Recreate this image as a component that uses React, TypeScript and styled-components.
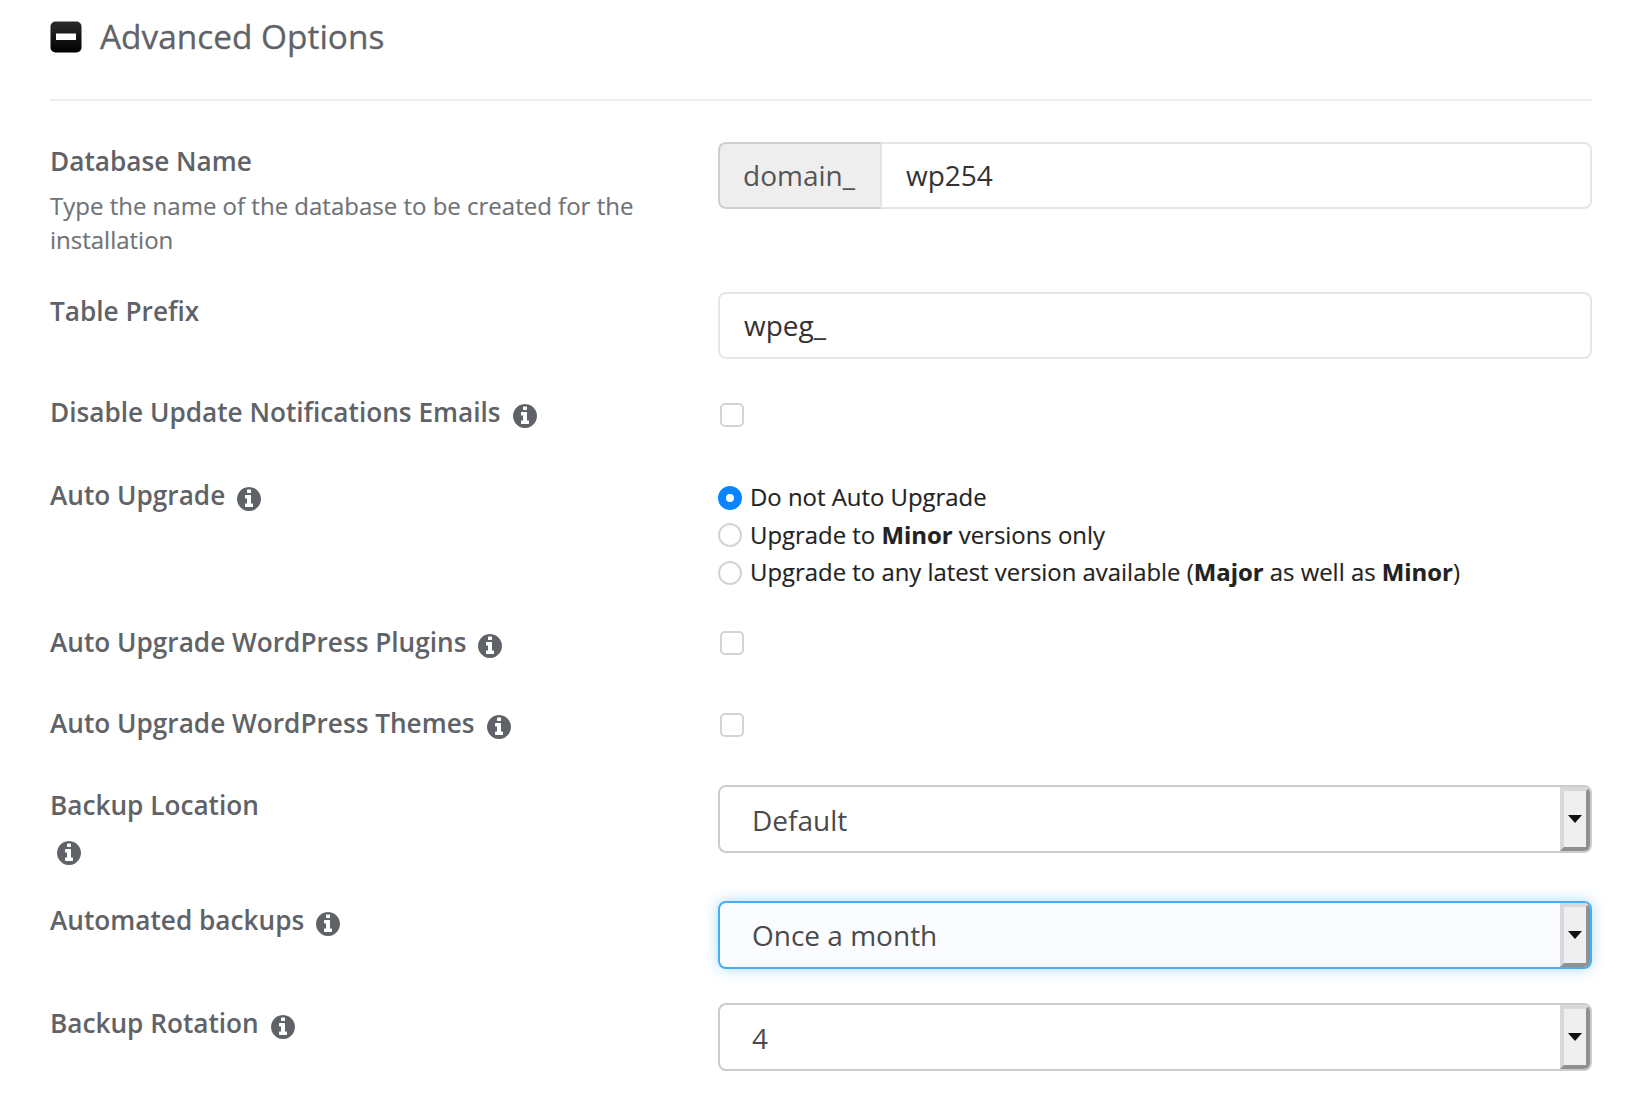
import React from "react";
import styled, { createGlobalStyle } from "styled-components";

const Global = createGlobalStyle`
  html, body { margin: 0; padding: 0; background: #fff; }
  body { font-family: "Open Sans", "Noto Sans", sans-serif; }
`;

const Page = styled.div`
  width: 1644px;
  height: 1111px;
  box-sizing: border-box;
  padding: 0 52px 0 50px;
  overflow: hidden;
`;

const Header = styled.header`
  box-sizing: border-box;
  border-bottom: 2px solid #eeeeee;
  height: 101px;
  display: flex;
  align-items: flex-start;
  padding-top: 14px;
  gap: 18px;
`;

const Title = styled.h2`
  margin: 0;
  font-size: 33.4px;
  line-height: 45px;
  font-weight: 400;
  color: #5f6368;
  -webkit-text-stroke: 0.3px #5f6368;
`;

const ToggleIcon = styled.svg`
  width: 32px;
  height: 32px;
  margin-top: 7px;
  flex: none;
`;

const Form = styled.div`
  padding-top: 41px;
`;

const Row = styled.div<{ $h: number }>`
  display: grid;
  grid-template-columns: 668px 1fr;
  min-height: ${(p) => p.$h}px;
  align-items: start;
`;

const LabelCol = styled.div<{ $offset?: number }>`
  margin-top: ${(p) => p.$offset ?? 0}px;
`;

const Label = styled.div`
  font-size: 26.2px;
  line-height: 38px;
  font-weight: 600;
  color: #5f6368;
`;

const Desc = styled.div`
  font-size: 24px;
  line-height: 34px;
  color: #6f7377;
  margin-top: 9px;
  width: 610px;
  -webkit-text-stroke: 0.15px #6f7377;
`;

const InfoSvg = styled.svg`
  width: 24px;
  height: 24px;
  fill: #5f6368;
  vertical-align: -6px;
  margin-left: 12px;
`;

const InfoBlock = styled.div`
  margin-top: 17px;
  height: 24px;
  line-height: 0;
  padding-left: 7px;
  & svg { margin-left: 0; vertical-align: top; }
`;

const Info = () => (
  <InfoSvg viewBox="128 128 1536 1536" aria-hidden="true">
    <path d="M1152 1376v-160q0-14-9-23t-23-9h-96v-512q0-14-9-23t-23-9h-320q-14 0-23 9t-9 23v160q0 14 9 23t23 9h96v320h-96q-14 0-23 9t-9 23v160q0 14 9 23t23 9h448q14 0 23-9t9-23zm-128-896v-160q0-14-9-23t-23-9h-192q-14 0-23 9t-9 23v160q0 14 9 23t23 9h192q14 0 23-9t9-23zm640 416q0 209-103 385.5t-279.5 279.5-385.5 103-385.5-103-279.5-279.5-103-385.5 103-385.5 279.5-279.5 385.5-103 385.5 103 279.5 279.5 103 385.5z" />
  </InfoSvg>
);

const Control = styled.div<{ $offset?: number }>`
  padding-top: ${(p) => p.$offset ?? 0}px;
`;

const InputGroup = styled.div`
  display: flex;
  height: 67px;
`;

const Addon = styled.div`
  width: 164px;
  box-sizing: border-box;
  background: #eeeeee;
  border: 2px solid #cfcfcf;
  border-right: 2px solid #e4e4e4;
  border-radius: 8px 0 0 8px;
  font-size: 28px;
  line-height: 63px;
  color: #555555;
  padding-left: 23px;
`;

const TextInput = styled.input<{ $joined?: boolean }>`
  flex: 1;
  display: block;
  width: 100%;
  height: 67px;
  box-sizing: border-box;
  border: 2px solid #e6e6e6;
  border-left-width: ${(p) => (p.$joined ? 0 : 2)}px;
  border-radius: ${(p) => (p.$joined ? "0 8px 8px 0" : "8px")};
  padding: 0 24px 2px;
  font: 400 28px "Open Sans", sans-serif;
  color: #333333;
  background: #fff;
  outline: none;
`;

const Checkbox = styled.span`
  display: block;
  width: 24px;
  height: 24px;
  margin-left: 2px;
  box-sizing: border-box;
  border: 2px solid #d4d4d4;
  border-radius: 5px;
  background: #fff;
`;

const RadioList = styled.div`
  display: flex;
  flex-direction: column;
`;

const RadioRow = styled.div`
  display: flex;
  align-items: center;
  gap: 8px;
  height: 37.5px;
  font-size: 23.9px;
  color: #222222;
  & b { font-weight: 700; }
`;

const RadioText = styled.span`
  margin-top: -2px;
  -webkit-text-stroke: 0.15px #222222;
`;

const Radio = styled.span<{ $on?: boolean }>`
  flex: none;
  width: 24px;
  height: 24px;
  box-sizing: border-box;
  border-radius: 50%;
  background: #fff;
  border: ${(p) => (p.$on ? "8px solid #0a84ff" : "2px solid #d4d4d4")};
`;

const Select = styled.div<{ $focus?: boolean }>`
  display: flex;
  height: 67.5px;
  box-sizing: border-box;
  border: 2px solid ${(p) => (p.$focus ? "#46aef5" : "#cccccc")};
  border-radius: 8px;
  background: ${(p) => (p.$focus ? "#fafcff" : "#fff")};
  box-shadow: ${(p) => (p.$focus ? "0 0 14px rgba(70,174,245,.45)" : "none")};
  overflow: hidden;
  overflow: clip;
`;

const SelectValue = styled.div<{ $focus?: boolean }>`
  flex: 1;
  padding-left: 32px;
  font-size: 28px;
  line-height: ${(p) => (p.$focus ? 64 : 66)}px;
  color: #4a4a4a;
`;

const SelectArrow = styled.div`
  width: 30px;
  box-sizing: border-box;
  display: flex;
  align-items: center;
  justify-content: center;
  background: #efefef;
  border-style: solid;
  border-width: 4px;
  border-color: #d8d8d8 #909090 #909090 #d8d8d8;
  &::after {
    content: "";
    display: block;
    border-style: solid;
    border-width: 8px 7px 0 7px;
    border-color: #111 transparent transparent transparent;
  }
`;

const Dropdown = ({ value, focus }: { value: string; focus?: boolean }) => (
  <Select $focus={focus}>
    <SelectValue $focus={focus}>{value}</SelectValue>
    <SelectArrow />
  </Select>
);

export default function App() {
  return (
    <Page>
      <Global />
      <Header>
        <ToggleIcon viewBox="0 0 32 32" aria-hidden="true">
          <defs>
            <linearGradient id="tg" x1="0" y1="0" x2="0" y2="1">
              <stop offset="0" stopColor="#2b2b2b" />
              <stop offset="1" stopColor="#000" />
            </linearGradient>
          </defs>
          <rect x="0.5" y="0.5" width="31" height="31" rx="5" fill="url(#tg)" />
          <rect x="6" y="12.5" width="20" height="6.5" fill="#fff" />
        </ToggleIcon>
        <Title>Advanced Options</Title>
      </Header>
      <Form>
        <Row $h={150}>
          <LabelCol>
            <Label>Database Name</Label>
            <Desc>Type the name of the database to be created for the installation</Desc>
          </LabelCol>
          <Control>
            <InputGroup>
              <Addon>domain_</Addon>
              <TextInput $joined readOnly value="wp254" />
            </InputGroup>
          </Control>
        </Row>
        <Row $h={102}>
          <LabelCol>
            <Label>Table Prefix</Label>
          </LabelCol>
          <Control>
            <TextInput readOnly value="wpeg_" />
          </Control>
        </Row>
        <Row $h={82}>
          <LabelCol $offset={-1}>
            <Label>Disable Update Notifications Emails<Info /></Label>
          </LabelCol>
          <Control $offset={9}>
            <Checkbox />
          </Control>
        </Row>
        <Row $h={148}>
          <LabelCol>
            <Label>Auto Upgrade<Info /></Label>
          </LabelCol>
          <Control $offset={3}>
            <RadioList>
              <RadioRow><Radio $on /><RadioText>Do not Auto Upgrade</RadioText></RadioRow>
              <RadioRow><Radio /><RadioText>Upgrade to <b>Minor</b> versions only</RadioText></RadioRow>
              <RadioRow><Radio /><RadioText>Upgrade to any latest version available (<b>Major</b> as well as <b>Minor</b>)</RadioText></RadioRow>
            </RadioList>
          </Control>
        </Row>
        <Row $h={80}>
          <LabelCol $offset={-1}>
            <Label>Auto Upgrade WordPress Plugins<Info /></Label>
          </LabelCol>
          <Control $offset={7}>
            <Checkbox />
          </Control>
        </Row>
        <Row $h={81}>
          <LabelCol>
            <Label>Auto Upgrade WordPress Themes<Info /></Label>
          </LabelCol>
          <Control $offset={9}>
            <Checkbox />
          </Control>
        </Row>
        <Row $h={116}>
          <LabelCol $offset={1}>
            <Label>Backup Location</Label>
            <InfoBlock><Info /></InfoBlock>
          </LabelCol>
          <Control>
            <Dropdown value="Default" />
          </Control>
        </Row>
        <Row $h={102}>
          <LabelCol>
            <Label>Automated backups<Info /></Label>
          </LabelCol>
          <Control>
            <Dropdown value="Once a month" focus />
          </Control>
        </Row>
        <Row $h={70}>
          <LabelCol $offset={1}>
            <Label>Backup Rotation<Info /></Label>
          </LabelCol>
          <Control>
            <Dropdown value="4" />
          </Control>
        </Row>
      </Form>
    </Page>
  );
}
